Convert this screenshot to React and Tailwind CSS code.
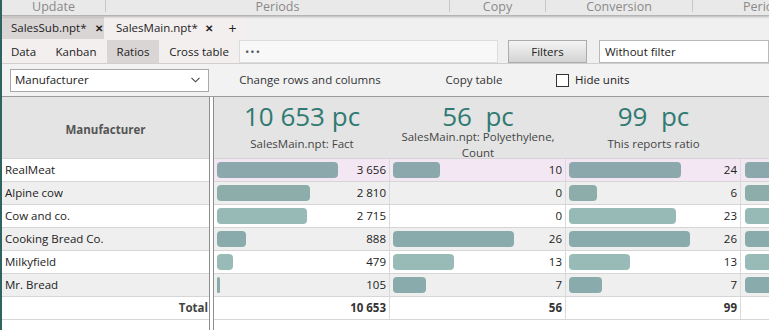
import React from "react";

const rows = [
  { name: "RealMeat", v: [3656, 10, 24], d: ["3 656", "10", "24"], color: "#8ba8ad", lav: true, alt: false },
  { name: "Alpine cow", v: [2810, 0, 6], d: ["2 810", "0", "6"], color: "#8dadab", alt: true },
  { name: "Cow and co.", v: [2715, 0, 23], d: ["2 715", "0", "23"], color: "#98bab6", alt: false },
  { name: "Cooking Bread Co.", v: [888, 26, 26], d: ["888", "26", "26"], color: "#8aabab", alt: true },
  { name: "Milkyfield", v: [479, 13, 13], d: ["479", "13", "13"], color: "#98bbb8", alt: false },
  { name: "Mr. Bread", v: [105, 7, 7], d: ["105", "7", "7"], color: "#8aabab", alt: true },
];
const maxes = [3656, 26, 26];
const colW = [176, 176, 175];

function Header({ num, sub, w }) {
  return (
    <div className="flex flex-col items-center shrink-0 h-full" style={{ width: w }}>
      <div className="h-[32px] pt-[4px] text-[26px] leading-[30px] text-[#2f7a72] whitespace-pre">{num}</div>
      <div className="flex-1 flex items-center justify-center text-center text-[11.5px] leading-[16px] text-[#444] px-1">
        {sub}
      </div>
    </div>
  );
}

export default function App() {
  return (
    <div className="w-[769px] h-[330px] overflow-hidden bg-white border-l-2 border-[#2e6361] font-['Open_Sans',sans-serif] text-[11.5px] text-[#222] flex flex-col">
      {/* top ribbon labels */}
      <div className="h-[16px] shrink-0 bg-[#e9e9e9] border-b border-[#b4b4b4] shadow-[0_1px_2px_rgba(0,0,0,0.25)] flex text-[12.5px] text-[#8a8a8a] overflow-hidden relative z-10">
        <div className="w-[103px] shrink-0 flex justify-center items-end leading-none pb-[2px]">Update</div>
        <div className="w-px shrink-0 h-[12px] bg-[#c8c8c8]" />
        <div className="w-[343px] shrink-0 flex justify-center items-end leading-none pb-[2px]">Periods</div>
        <div className="w-px shrink-0 h-[12px] bg-[#c8c8c8]" />
        <div className="w-[95px] shrink-0 flex justify-center items-end leading-none pb-[2px]">Copy</div>
        <div className="w-px shrink-0 h-[12px] bg-[#c8c8c8]" />
        <div className="w-[146px] shrink-0 flex justify-center items-end leading-none pb-[2px]">Conversion</div>
        <div className="w-px shrink-0 h-[12px] bg-[#c8c8c8]" />
        <div className="w-[144px] shrink-0 flex justify-center items-end leading-none pb-[2px]">Periods</div>
      </div>

      {/* file tabs */}
      <div className="h-[23px] shrink-0 bg-[#f0f0f0] flex items-stretch pt-[1px] gap-[2px]">
        <div className="w-[102px] shrink-0 bg-[#d9d5d5] flex items-center pl-[9px] gap-[9px]">
          <span>SalesSub.npt*</span>
          <span className="text-[10px] font-bold">✕</span>
        </div>
        <div className="w-[110px] shrink-0 bg-[#f3efef] flex items-center pl-[10px] gap-[7px]">
          <span>SalesMain.npt*</span>
          <span className="text-[10px] font-bold">✕</span>
        </div>
        <div className="w-[29px] shrink-0 bg-[#f3efef] flex items-center justify-center text-[14px]">+</div>
      </div>

      {/* view tabs + filters */}
      <div className="h-[25px] shrink-0 bg-[#f0f0f0] flex items-stretch pt-[1px] gap-[2px] border-b border-[#cfcfcf]">
        <div className="w-[43px] shrink-0 bg-[#f3efef] flex items-center justify-center">Data</div>
        <div className="w-[58px] shrink-0 bg-[#f3efef] flex items-center justify-center">Kanban</div>
        <div className="w-[52px] shrink-0 bg-[#d9d5d5] flex items-center justify-center">Ratios</div>
        <div className="w-[76px] shrink-0 bg-[#f3efef] flex items-center justify-center">Cross table</div>
        <div className="w-[259px] shrink-0 bg-[#f8f8f8] border border-[#dcdcdc] flex items-center pl-[5px] text-[#555] tracking-[1px]">•••</div>
        <div className="w-[6px] shrink-0" />
        <div className="w-[79px] shrink-0 border border-[#acacac] bg-gradient-to-b from-[#f4f4f4] to-[#d3d3d3] flex items-center justify-center">
          Filters
        </div>
        <div className="w-[8px] shrink-0" />
        <div className="flex-1 border border-[#b9b9b9] bg-white flex items-center pl-[5px]">Without filter</div>
      </div>

      {/* controls */}
      <div className="h-[32px] shrink-0 bg-[#f2f2f2] flex items-center">
        <div className="ml-[8px] shrink-0 w-[199px] h-[23px] border border-[#a9a9a9] bg-white flex items-center justify-between pl-[4px] pr-[8px]">
          <span>Manufacturer</span>
          <svg width="9" height="6" viewBox="0 0 9 6" fill="none" stroke="#444" strokeWidth="1.1">
            <path d="M0.5 0.8 L4.5 4.8 L8.5 0.8" />
          </svg>
        </div>
        <div className="w-[30px] shrink-0" />
        <div className="w-[142px] shrink-0 text-center text-[#333] whitespace-nowrap">Change rows and columns</div>
        <div className="w-[63px] shrink-0" />
        <div className="w-[60px] shrink-0 text-center text-[#333] whitespace-nowrap">Copy table</div>
        <div className="w-[52px] shrink-0" />
        <div className="w-[13px] h-[13px] shrink-0 border border-[#333] bg-white" />
        <div className="ml-[6px] text-[#222]">Hide units</div>
      </div>

      {/* table */}
      <div className="flex-1 flex border-t border-[#9c9c9c] min-h-0">
        {/* left column */}
        <div className="w-[207px] shrink-0 flex flex-col">
          <div className="h-[62px] shrink-0 bg-[#e4e4e4] border-b border-[#d4d4d4] flex items-center justify-center pt-[5px] font-bold text-[#555]">
            Manufacturer
          </div>
          {rows.map((r) => (
            <div
              key={r.name}
              className={`h-[23px] shrink-0 border-b border-[#d6d6d6] flex items-center pl-[3px] ${r.alt ? "bg-[#efefef]" : "bg-white"}`}
            >
              {r.name}
            </div>
          ))}
          <div className="h-[23px] shrink-0 border-b border-[#d6d6d6] flex items-center justify-end pr-[1px] font-bold text-[#444]">
            Total
          </div>
        </div>

        {/* double divider */}
        <div className="w-[5px] shrink-0 border-x border-[#8e8e8e] bg-white" />

        {/* data columns */}
        <div className="flex-1 flex flex-col min-w-0">
          <div className="h-[62px] shrink-0 bg-[#e4e4e4] border-b border-[#d4d4d4] flex overflow-visible">
            <Header num="10 653 pc" sub="SalesMain.npt: Fact" w={176} />
            <Header num="56  pc" sub={<>SalesMain.npt: Polyethylene,<br />Count</>} w={176} />
            <Header num="99  pc" sub="This reports ratio" w={175} />
          </div>
          {rows.map((r) => (
            <div
              key={r.name}
              className={`h-[23px] shrink-0 border-b border-[#d6d6d6] flex ${r.lav ? "bg-[#f3e7f4]" : r.alt ? "bg-[#efefef]" : "bg-white"}`}
            >
              {r.v.map((v, i) => (
                <div
                  key={i}
                  className="shrink-0 border-r border-[#dadada] flex items-center justify-between pl-[3px] pr-[3px]"
                  style={{ width: colW[i] }}
                >
                  <div
                    className="h-[16px] rounded-[4px]"
                    style={{ width: Math.max(v ? 3 : 0, Math.round((v / maxes[i]) * 121)), backgroundColor: r.color }}
                  />
                  <span>{r.d[i]}</span>
                </div>
              ))}
              <div className="flex-1 flex items-center pl-[4px]">
                <div className="h-[16px] w-[80px] shrink-0 rounded-[4px]" style={{ backgroundColor: r.color }} />
              </div>
            </div>
          ))}
          <div className="h-[23px] shrink-0 border-b border-[#d6d6d6] flex font-bold text-[#333]">
            {["10 653", "56", "99"].map((t, i) => (
              <div
                key={i}
                className="shrink-0 border-r border-[#dadada] flex items-center justify-end pr-[3px]"
                style={{ width: colW[i] }}
              >
                {t}
              </div>
            ))}
            <div className="flex-1" />
          </div>
        </div>
      </div>
    </div>
  );
}
